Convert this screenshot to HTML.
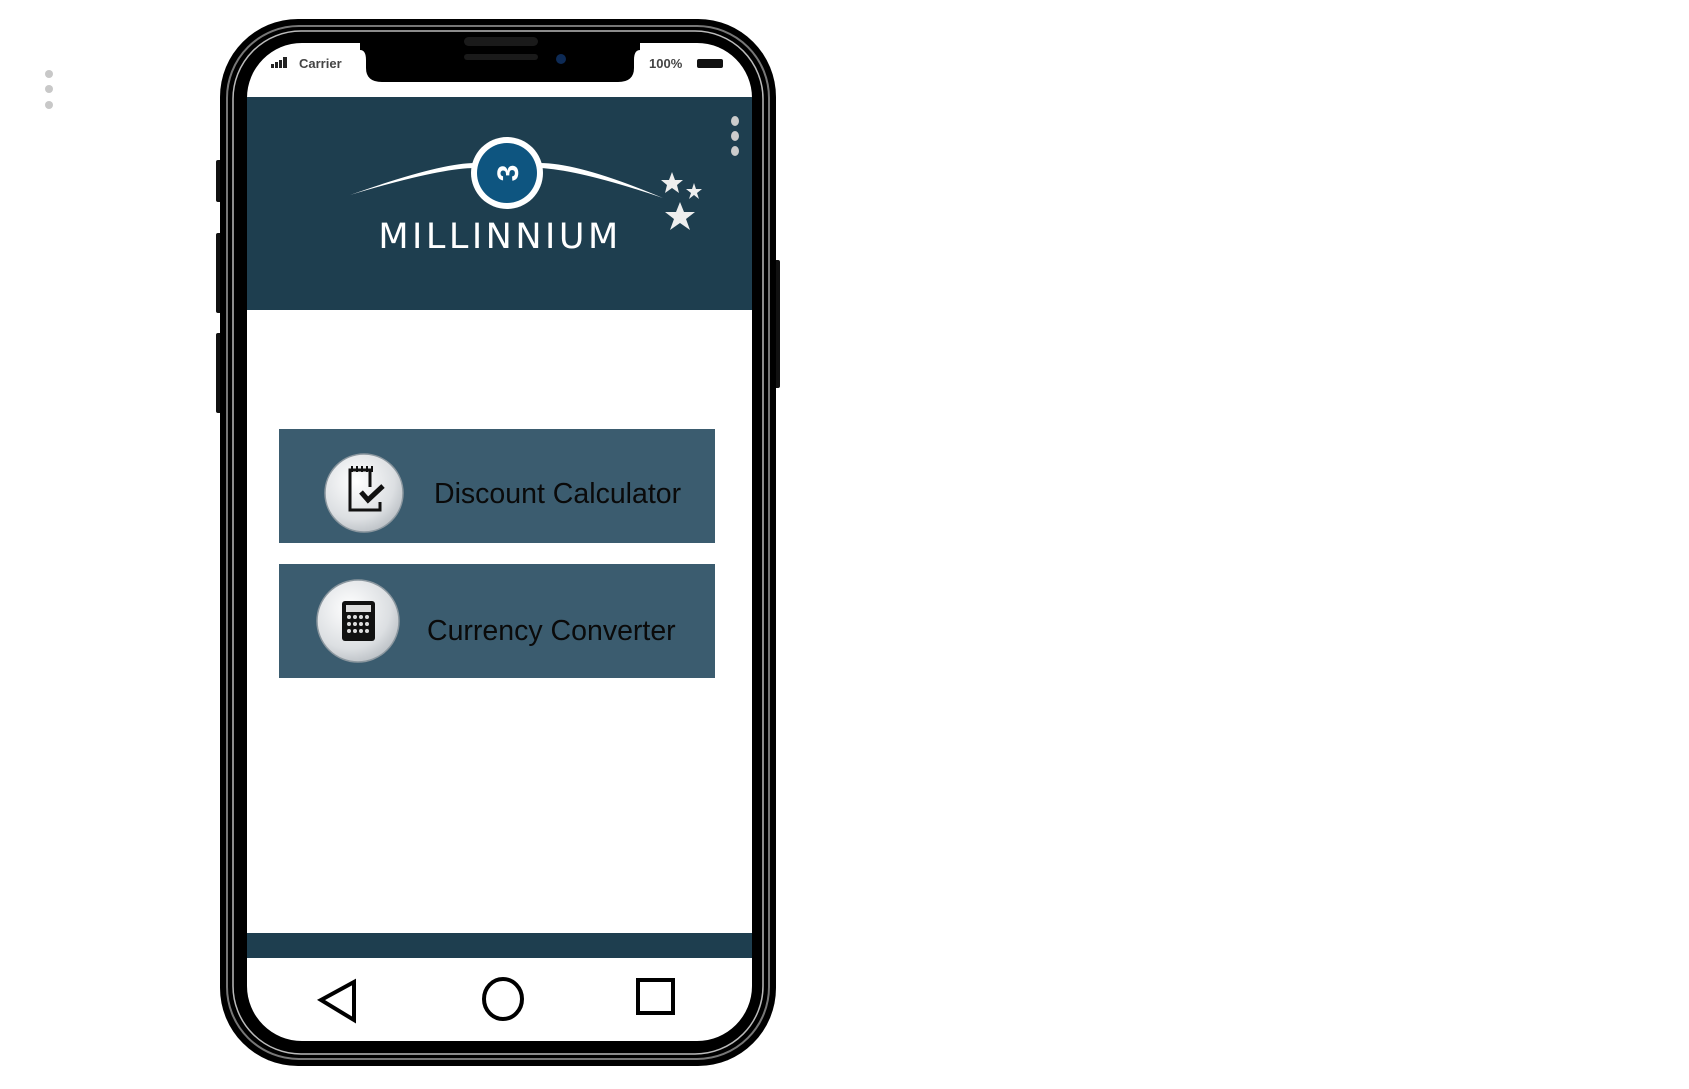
<!DOCTYPE html>
<html><head><meta charset="utf-8"><style>
html,body{margin:0;padding:0;background:#fff;}
body{width:1689px;height:1089px;position:relative;overflow:hidden;font-family:"Liberation Sans",sans-serif;}
</style></head><body>
<svg width="1689" height="1089" viewBox="0 0 1689 1089" xmlns="http://www.w3.org/2000/svg" style="position:absolute;left:0;top:0">
  <circle cx="49" cy="74" r="4" fill="#c8c8c8"/>
  <circle cx="49" cy="89" r="4" fill="#c8c8c8"/>
  <circle cx="49" cy="105" r="4" fill="#c8c8c8"/>
  <rect x="216" y="160" width="8" height="42" rx="2" fill="#111"/>
  <rect x="216" y="233" width="8" height="80" rx="2" fill="#111"/>
  <rect x="216" y="333" width="8" height="80" rx="2" fill="#111"/>
  <rect x="773" y="260" width="7" height="128" rx="2" fill="#111"/>
  <rect x="220" y="19" width="556" height="1047" rx="78" fill="#000"/>
  <rect x="227" y="26" width="542" height="1033" rx="72" fill="none" stroke="#777" stroke-width="2"/>
  <rect x="233" y="31" width="530" height="1023" rx="68" fill="none" stroke="#bbb" stroke-width="1.5"/>
  <clipPath id="scr"><rect x="247" y="43" width="505" height="998" rx="55"/></clipPath>
  <g clip-path="url(#scr)">
    <rect x="247" y="43" width="505" height="998" fill="#fff"/>
    <rect x="247" y="97" width="505" height="213" fill="#1e3e4f"/>
    <rect x="247" y="933" width="505" height="25" fill="#1e3e4f"/>
  </g>
  <path d="M360 43 L640 43 L640 50 Q634 50 634 60 L634 68 Q634 82 618 82 L382 82 Q366 82 366 68 L366 60 Q366 50 360 50 Z" fill="#000"/>
  <rect x="464" y="37" width="74" height="9" rx="4.5" fill="#1a1a1a"/>
  <rect x="464" y="54" width="74" height="6" rx="3" fill="#1a1a1a"/>
  <circle cx="561" cy="59" r="5" fill="#0d2a55"/>
  <rect x="271" y="64" width="3" height="4" fill="#222"/>
  <rect x="275" y="62" width="3" height="6" fill="#222"/>
  <rect x="279" y="60" width="3" height="8" fill="#222"/>
  <rect x="283" y="57" width="4" height="11" fill="#222"/>
  <text x="299" y="68" font-size="13" fill="#444" font-weight="bold">Carrier</text>
  <text x="649" y="68" font-size="13" fill="#444" font-weight="bold">100%</text>
  <rect x="697" y="59" width="26" height="9" rx="2" fill="#111"/>
  <ellipse cx="735" cy="121" rx="4" ry="5" fill="#ccc"/>
  <ellipse cx="735" cy="136" rx="4" ry="5" fill="#ccc"/>
  <ellipse cx="735" cy="151" rx="4" ry="5" fill="#ccc"/>
  <path d="M350 195 Q440 163 475 163 L540 163 Q580 163 663 198 Q580 170 540 168 L475 168 Q440 168 350 195 Z" fill="#fff"/>
  <circle cx="507" cy="173" r="36" fill="#fff"/>
  <circle cx="507" cy="173" r="30" fill="#0e5580"/>
  <text x="507" y="184" font-size="30" fill="#fff" font-weight="bold" text-anchor="middle" transform="rotate(-90 507 173)">3</text>
  <polygon points="672,172 675,180 683,180 677,185 679,193 672,188 665,193 667,185 661,180 669,180" fill="#eee"/>
  <polygon points="694,183 696,189 702,189 697,193 699,199 694,195 689,199 691,193 686,189 692,189" fill="#eee"/>
  <polygon points="680,202 684,212 695,212 686,219 690,230 680,223 670,230 674,219 665,212 676,212" fill="#eee"/>
  <text x="500" y="248" font-size="35" fill="#fff" text-anchor="middle" font-family="'DejaVu Sans',sans-serif" letter-spacing="3.5">MILLINNIUM</text>
  <rect x="279" y="429" width="436" height="114" fill="#3b5c6f"/>
  <rect x="279" y="564" width="436" height="114" fill="#3b5c6f"/>
  <defs><radialGradient id="g" cx="0.4" cy="0.35" r="0.7"><stop offset="0" stop-color="#fff"/><stop offset="0.7" stop-color="#dcdfe2"/><stop offset="1" stop-color="#b9bec3"/></radialGradient></defs>
  <circle cx="364" cy="493" r="39" fill="url(#g)" stroke="#8b979f" stroke-width="1.5"/>
  <circle cx="358" cy="621" r="41" fill="url(#g)" stroke="#8b979f" stroke-width="1.5"/>
  <path d="M370 487 L370 470 L350 470 L350 510 L380 510 L380 502" fill="none" stroke="#111" stroke-width="3"/>
  <path d="M352 466 v6 M357 466 v6 M362 466 v6 M367 466 v6 M372 466 v6" stroke="#111" stroke-width="2"/>
  <path d="M361 492 L368 500 L383 486" fill="none" stroke="#111" stroke-width="5"/>
  <rect x="342" y="601" width="33" height="40" rx="3" fill="#111"/>
  <rect x="346" y="605" width="25" height="7" fill="#ddd"/>
  <g fill="#ddd">
    <circle cx="349" cy="617" r="2"/><circle cx="355" cy="617" r="2"/><circle cx="361" cy="617" r="2"/><circle cx="367" cy="617" r="2"/>
    <circle cx="349" cy="624" r="2"/><circle cx="355" cy="624" r="2"/><circle cx="361" cy="624" r="2"/><circle cx="367" cy="624" r="2"/>
    <circle cx="349" cy="631" r="2"/><circle cx="355" cy="631" r="2"/><circle cx="361" cy="631" r="2"/><circle cx="367" cy="631" r="2"/>
  </g>
  <text x="434" y="503" font-size="28.5" fill="#0a0a0a">Discount Calculator</text>
  <text x="427" y="640" font-size="28.5" fill="#0a0a0a">Currency Converter</text>
  <path d="M321 1000 L354 982 L354 1020 Z" fill="none" stroke="#000" stroke-width="4"/>
  <ellipse cx="503" cy="999" rx="19" ry="20" fill="none" stroke="#000" stroke-width="4"/>
  <rect x="638" y="980" width="35" height="33" fill="none" stroke="#000" stroke-width="4"/>
</svg>
</body></html>
